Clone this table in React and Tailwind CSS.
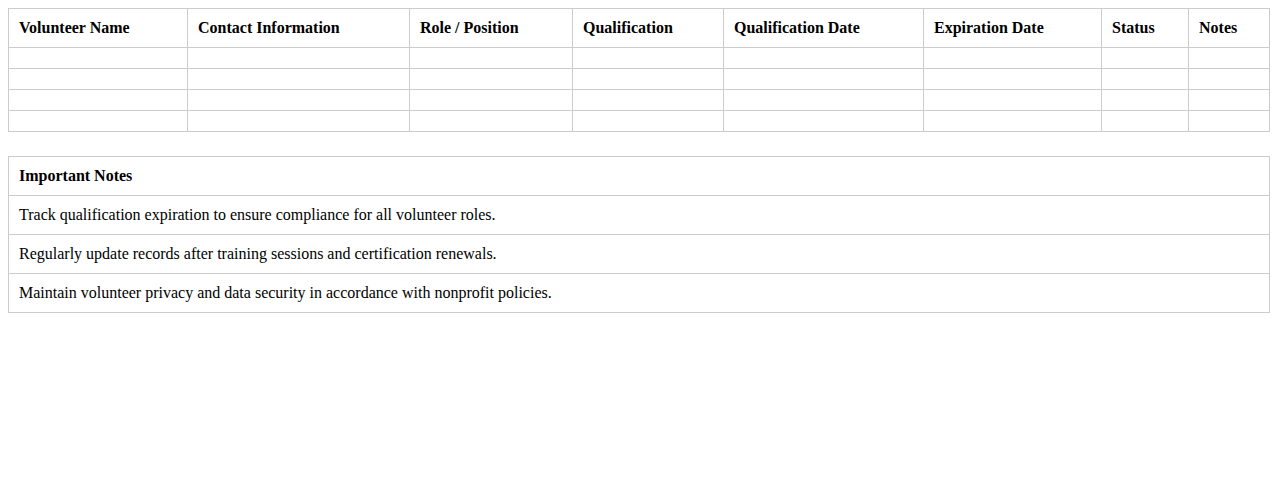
export default function App() {
  const cols = [
    { label: 'Volunteer Name', w: 'w-[179px]' },
    { label: 'Contact Information', w: 'w-[222px]' },
    { label: 'Role / Position', w: 'w-[163px]' },
    { label: 'Qualification', w: 'w-[151px]' },
    { label: 'Qualification Date', w: 'w-[200px]' },
    { label: 'Expiration Date', w: 'w-[178px]' },
    { label: 'Status', w: 'w-[87px]' },
    { label: 'Notes', w: 'w-[81px]' },
  ]
  const notes = [
    'Track qualification expiration to ensure compliance for all volunteer roles.',
    'Regularly update records after training sessions and certification renewals.',
    'Maintain volunteer privacy and data security in accordance with nonprofit policies.',
  ]

  return (
    <div className="min-h-screen bg-white p-2 text-black font-['Liberation_Serif',serif] text-base leading-[18px]">
      {/* Volunteer table */}
      <table className="w-full table-fixed border-collapse border border-[#ccc]">
        <thead>
          <tr>
            {cols.map((c) => (
              <th key={c.label} className={`${c.w} border border-[#ccc] p-[10px] text-left font-bold`}>
                {c.label}
              </th>
            ))}
          </tr>
        </thead>
        <tbody>
          {[0, 1, 2, 3].map((r) => (
            <tr key={r}>
              {cols.map((c) => (
                <td key={c.label} className="border border-[#ccc] p-[10px]"></td>
              ))}
            </tr>
          ))}
        </tbody>
      </table>

      {/* Notes */}
      <table className="mt-6 w-full border-collapse border border-[#ccc]">
        <thead>
          <tr>
            <th className="border border-[#ccc] p-[10px] text-left font-bold">Important Notes</th>
          </tr>
        </thead>
        <tbody>
          {notes.map((n) => (
            <tr key={n}>
              <td className="border border-[#ccc] p-[10px]">{n}</td>
            </tr>
          ))}
        </tbody>
      </table>
    </div>
  )
}
